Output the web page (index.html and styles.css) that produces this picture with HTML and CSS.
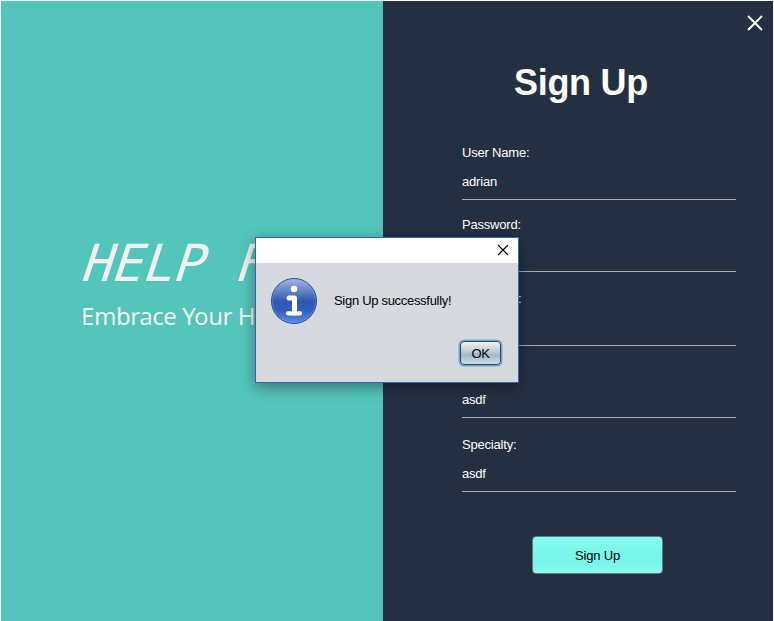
FILE: index.html
```html
<!DOCTYPE html>
<html lang="en">
<head>
<meta charset="utf-8">
<title>Sign Up</title>
<link rel="stylesheet" href="styles.css">
</head>
<body>
<div class="app">
  <section class="brand">
    <h2 class="brand-name">HELP F</h2>
    <p class="tagline">Embrace Your H</p>
  </section>
  <main class="panel">
    <svg class="close" viewBox="0 0 16 16"><path d="M1 1L15 15M15 1L1 15"/></svg>
    <h1 class="title">Sign Up</h1>
    <form class="form">
      <div class="field"><label>User Name:</label><span class="value">adrian</span></div>
      <div class="field"><label>Password:</label><span class="value"></span></div>
      <div class="field tall"><label class="tail">:</label><span class="value"></span></div>
      <div class="field"><label></label><span class="value">asdf</span></div>
      <div class="field tall"><label>Specialty:</label><span class="value">asdf</span></div>
    </form>
    <button class="submit" type="button">Sign Up</button>
  </main>
  <div class="dialog" role="dialog">
    <header class="dialog-bar">
      <svg class="dialog-close" viewBox="0 0 12 12"><path d="M1 1L11 11M11 1L1 11"/></svg>
    </header>
    <div class="dialog-body">
      <svg class="info" viewBox="0 0 48 48">
        <defs><linearGradient id="blue" x1="0" y1="0" x2="0" y2="1">
          <stop offset="0" stop-color="#a3b7e2"/><stop offset=".25" stop-color="#6988cb"/>
          <stop offset=".5" stop-color="#2e59b1"/><stop offset=".7" stop-color="#2f5eb9"/><stop offset="1" stop-color="#5a8ceb"/>
        </linearGradient></defs>
        <circle cx="24" cy="24" r="22.5" fill="url(#blue)" stroke="#264b96"/>
        <circle cx="24" cy="24" r="21.5" fill="none" stroke="#8eabe9" stroke-opacity=".35"/>
        <circle cx="24" cy="12" r="3.2" fill="#fff"/>
        <path d="M19 21H24.5V36" fill="none" stroke="#fff" stroke-width="5" stroke-linecap="round" stroke-linejoin="round"/>
        <path d="M18 36.3H30" fill="none" stroke="#fff" stroke-width="4.2" stroke-linecap="round"/>
      </svg>
      <p class="message">Sign Up successfully!</p>
    </div>
    <button class="ok" type="button">OK</button>
  </div>
</div>
</body>
</html>
```
FILE: styles.css
```css
* { box-sizing: border-box; }
body { margin: 0; background: #fff; font: 13px/16px "Liberation Sans", Arial, sans-serif; letter-spacing: -.2px; }
h1, h2, p { margin: 0; font-weight: normal; }
.app { position: relative; display: flex; width: 774px; height: 621px; padding: 1px 1px 0; overflow: hidden; }
.brand { width: 382px; padding: 233px 0 0 80px; background: #54c5ba; color: #f0f0f0; white-space: nowrap; overflow: hidden; }
.brand-name { margin-left: -6px; font: 51px/60px "DejaVu Sans Mono", monospace; letter-spacing: -.1px; transform: skewX(-18deg); transform-origin: 0 100%; }
.tagline { margin-top: 6px; font: 24px/32px "Noto Sans", sans-serif; letter-spacing: -.45px; }
.panel { position: relative; flex: 1; display: flex; flex-direction: column; background: #243042; color: #fff; }
.close { position: absolute; right: 10px; top: 14px; width: 16px; height: 16px; fill: none; stroke: #fff; stroke-width: 2; }
.title { margin: 61px 0 0 131px; font-size: 36px; line-height: 42px; font-weight: bold; letter-spacing: -.3px; }
.form { width: 274px; margin: 24px 0 0 79px; }
.field { display: flex; flex-direction: column; justify-content: flex-end; height: 72px; border-bottom: 1px solid #a8adb4; }
.field.tall { height: 74px; }
.field label { height: 16px; }
.field .tail { padding-left: 56px; }
.value { height: 16px; margin: 13px 0 9px; }
.submit { width: 131px; height: 38px; margin: 44px 0 0 149px; border: 1px solid #66797f; border-radius: 4px; background: linear-gradient(#87fff3, #79f6e9 50%, #79f6e9 75%, #8afff5); font: inherit; letter-spacing: inherit; color: #000; padding: 1px 0 0; }
.dialog { position: absolute; left: 255px; top: 237px; width: 264px; height: 146px; display: flex; flex-direction: column; border: 1px solid #405fac; background: #d6d9e0; color: #000; box-shadow: 0 4px 14px rgba(0, 0, 0, .4); }
.dialog-bar { display: flex; justify-content: flex-end; height: 25px; padding: 6px 9px 0 0; background: #fff; }
.dialog-close { width: 12px; height: 12px; stroke: #000; stroke-width: 1.1; }
.dialog-body { display: flex; align-items: center; height: 48px; margin: 14px 0 0 14px; }
.info { width: 48px; height: 48px; }
.message { margin-left: 16px; letter-spacing: -.3px; }
.ok { align-self: flex-end; width: 41px; height: 24px; margin: 16px 17px 0 0; padding: 1px 0 0; border: 1px solid #35465a; border-radius: 4px; background: linear-gradient(#eef1f5, #bdc9d5 45%, #a3b7c8 60%, #cfdeea); box-shadow: 0 0 0 1.5px #73a4d1; font: inherit; letter-spacing: -.4px; color: #000; }
```
